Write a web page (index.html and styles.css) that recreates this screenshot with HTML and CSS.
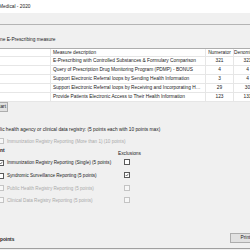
FILE: index.html
```html
<!DOCTYPE html>
<html lang="en">
<head>
  <meta charset="UTF-8">
  <title>Medical - 2020</title>
  <link rel="stylesheet" href="styles.css">
</head>
<body>

  <div class="window">
    <div class="titlebar">Medical - 2020</div>
    <div class="toolbar"></div>

    <div class="caption">ne E-Prescribing measure</div>

    <div class="measures">
      <div class="row head">
        <span></span>
        <span class="desc">Measure description</span>
        <span class="num">Numerator</span>
        <span class="num">Denominator</span>
      </div>
      <div class="row">
        <span></span>
        <span class="desc">E-Prescribing with Controlled Substances &amp; Formulary Comparison</span>
        <span class="num">321</span>
        <span class="num">321</span>
      </div>
      <div class="row">
        <span></span>
        <span class="desc">Query of Prescription Drug Monitoring Program (PDMP) - BONUS</span>
        <span class="num">4</span>
        <span class="num">4</span>
      </div>
      <div class="row">
        <span></span>
        <span class="desc">Support Electronic Referral loops by Sending Health Information</span>
        <span class="num">3</span>
        <span class="num">4</span>
      </div>
      <div class="row">
        <span></span>
        <span class="desc">Support Electronic Referral loops by Receiving and Incorporating Health Information</span>
        <span class="num">29</span>
        <span class="num">30</span>
      </div>
      <div class="row">
        <span></span>
        <span class="desc">Provide Patients Electronic Access to Their Health Information</span>
        <span class="num">123</span>
        <span class="num">131</span>
      </div>
    </div>

    <button class="start">Start</button>

    <p class="registry">lic health agency or clinical data registry: (5 points each with 10 points max)</p>
    <div class="check disabled"><span class="box"></span>Immunization Registry Reporting (More than 1) (10 points)</div>

    <div class="group">
      <div class="group-title">nt</div>
      <div class="excl-title">Exclusions</div>

      <div class="check"><span class="box"><svg viewBox="0 0 6 6"><polyline points="1,3 2.5,4.5 5,1.2" /></svg></span>Immunization Registry Reporting (Single) (5 points)</div>
      <div class="excl"><span class="box"></span></div>

      <div class="check"><span class="box"></span>Syndromic Surveillance Reporting (5 points)</div>
      <div class="excl"><span class="box"><svg viewBox="0 0 6 6"><polyline points="1,3 2.5,4.5 5,1.2" /></svg></span></div>

      <div class="check disabled"><span class="box"></span>Public Health Registry Reporting (5 points)</div>
      <div class="excl disabled"><span class="box"></span></div>

      <div class="check disabled"><span class="box"></span>Clinical Data Registry Reporting (5 points)</div>
      <div class="excl disabled"><span class="box"></span></div>
    </div>

    <div class="footer">
      <span class="total">points</span>
      <button class="print">Print</button>
    </div>
  </div>

</body>
</html>
```

FILE: styles.css
```css
* {
  box-sizing: border-box;
}

body {
  margin: 0;
  width: 250px;
  height: 250px;
  overflow: hidden;
  background-color: #f0f0f0;
  font-family: 'Liberation Sans', Arial, sans-serif;
  font-size: 4.8px;
  color: #222;
}

.window {
  display: flex;
  flex-direction: column;
  height: 250px;
}

.titlebar {
  height: 13px;
  line-height: 13px;
  background-color: #fff;
  text-indent: -1px;
}

.toolbar {
  height: 12px;
  border-bottom: 1px solid #b4b4b4;
}

.caption {
  line-height: 6px;
  margin: 12px 0 5px;
}

.measures {
  width: 262px;
  background-color: #fff;
  border-top: 1px solid #adadad;
}

.row {
  display: grid;
  grid-template-columns: 51px 155px 28px 28px;
  height: 9px;
  line-height: 8px;
  border-bottom: 1px solid #e6e6e6;
}

.row.head {
  height: 8px;
  line-height: 7px;
}

.row span {
  border-right: 1px solid #e6e6e6;
  white-space: nowrap;
  overflow: hidden;
  text-overflow: ellipsis;
}

.desc {
  padding: 0 3px 0 2px;
}

.num {
  text-align: center;
}

button {
  font-family: inherit;
  font-size: 4.8px;
  padding: 0;
  height: 10px;
  line-height: 8px;
  background-color: #e1e1e1;
  border: 1px solid #adadad;
  color: #222;
}

.start {
  align-self: flex-start;
  width: 17px;
  margin-left: -9px;
  text-align: right;
  padding-right: 1px;
}

.registry {
  margin: 15px 0 0;
  line-height: 6px;
}

.check {
  display: flex;
  align-items: center;
  gap: 3px;
  white-space: nowrap;
  font-size: 4.6px;
}

.disabled {
  color: #aaa;
}

.registry + .check {
  height: 8px;
  margin-top: 4px;
}

.box {
  flex: none;
  width: 6px;
  height: 6px;
  border: 1px solid #5a5a5a;
  background-color: #fff;
  display: flex;
}

.check .box {
  margin-left: -2px;
}

.disabled .box {
  border-color: #c4c4c4;
  background-color: #f7f7f7;
}

.box svg {
  width: 100%;
  height: 100%;
  fill: none;
  stroke: #222;
  stroke-width: 0.9;
}

.group {
  display: grid;
  grid-template-columns: 118px 1fr;
  grid-template-rows: 8px 13px 13px 12px 12px;
  margin-top: 3px;
}

.group-title {
  font-weight: bold;
  line-height: 6px;
}

.excl-title {
  line-height: 6px;
  padding-top: 3px;
}

.excl {
  display: flex;
  align-items: center;
  padding-left: 6px;
  padding-bottom: 1px;
}

.footer {
  margin-top: auto;
  height: 16px;
  display: flex;
  justify-content: space-between;
  align-items: flex-start;
  border-bottom: 1px solid #a0a0a0;
  margin-bottom: 1px;
}

.total {
  font-weight: bold;
  line-height: 6px;
  margin-top: 4px;
}

.print {
  width: 31px;
  margin-right: -11px;
}
```
